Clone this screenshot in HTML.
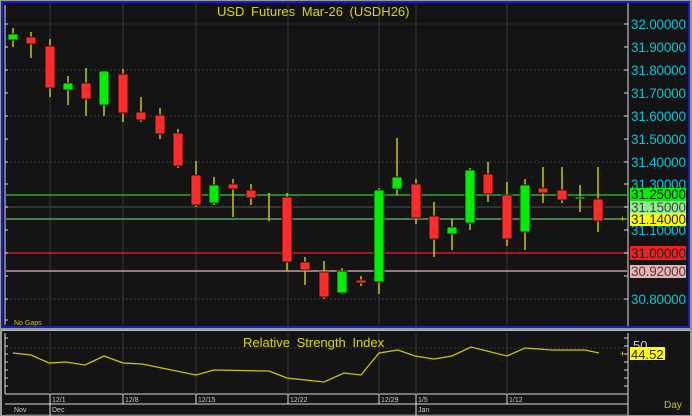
<!DOCTYPE html>
<html><head><meta charset="utf-8"><style>
html,body{margin:0;padding:0;background:#141414;width:692px;height:416px;overflow:hidden}
svg{display:block}
text{font-family:"Liberation Sans",sans-serif}
</style></head><body>
<svg width="692" height="416" viewBox="0 0 692 416" xmlns="http://www.w3.org/2000/svg">
<rect x="0" y="0" width="692" height="416" fill="#9a9a9a"/>
<rect x="1" y="1" width="689" height="327" fill="#1a1ad0"/>
<rect x="3" y="3" width="685" height="323" fill="#141414"/>
<g stroke="#2c2c2c" stroke-width="1.5">
<line x1="50" y1="3" x2="50" y2="326"/><line x1="123" y1="3" x2="123" y2="326"/>
<line x1="196" y1="3" x2="196" y2="326"/><line x1="288" y1="3" x2="288" y2="326"/>
<line x1="379" y1="3" x2="379" y2="326"/><line x1="416" y1="3" x2="416" y2="326"/>
<line x1="507" y1="3" x2="507" y2="326"/>
</g>
<g stroke="#3a3a3a" stroke-dasharray="2,2">
<line x1="6" y1="24" x2="627" y2="24"/><line x1="6" y1="70" x2="627" y2="70"/>
<line x1="6" y1="116" x2="627" y2="116"/><line x1="6" y1="162" x2="627" y2="162"/>
<line x1="6" y1="299" x2="627" y2="299"/>
</g>
<line x1="6" y1="207" x2="627" y2="207" stroke="#333" stroke-width="2"/>
<line x1="6" y1="195" x2="627" y2="195" stroke="#2fa82f" stroke-width="1.5"/>
<line x1="6" y1="219" x2="627" y2="219" stroke="#5fa05f" stroke-width="1.5"/>
<line x1="6" y1="253" x2="627" y2="253" stroke="#c81e1e" stroke-width="1.5"/>
<line x1="6" y1="271" x2="627" y2="271" stroke="#c89a9a" stroke-width="1.5"/>
<line x1="5" y1="5" x2="5" y2="325" stroke="#ddd"/>
<g stroke="#ddd">
<line x1="5" y1="24" x2="8" y2="24"/><line x1="5" y1="47" x2="8" y2="47"/><line x1="5" y1="70" x2="8" y2="70"/><line x1="5" y1="93" x2="8" y2="93"/><line x1="5" y1="116" x2="8" y2="116"/><line x1="5" y1="139" x2="8" y2="139"/><line x1="5" y1="162" x2="8" y2="162"/><line x1="5" y1="184" x2="8" y2="184"/><line x1="5" y1="207" x2="8" y2="207"/><line x1="5" y1="230" x2="8" y2="230"/><line x1="5" y1="253" x2="8" y2="253"/><line x1="5" y1="276" x2="8" y2="276"/><line x1="5" y1="299" x2="8" y2="299"/><line x1="5" y1="320" x2="8" y2="320"/>
</g>
<line x1="628" y1="3" x2="628" y2="326" stroke="#ddd"/>
<g stroke="#ddd">
<line x1="624" y1="24" x2="628" y2="24"/><line x1="624" y1="47" x2="628" y2="47"/><line x1="624" y1="70" x2="628" y2="70"/><line x1="624" y1="93" x2="628" y2="93"/><line x1="624" y1="116" x2="628" y2="116"/><line x1="624" y1="139" x2="628" y2="139"/><line x1="624" y1="162" x2="628" y2="162"/><line x1="624" y1="184" x2="628" y2="184"/><line x1="624" y1="207" x2="628" y2="207"/><line x1="624" y1="230" x2="628" y2="230"/><line x1="624" y1="253" x2="628" y2="253"/><line x1="624" y1="276" x2="628" y2="276"/><line x1="624" y1="299" x2="628" y2="299"/>
</g>
<g fill="#00c8d8" font-size="13.5">
<text x="631" y="29" textLength="55">32.00000</text><text x="631" y="52" textLength="55">31.90000</text><text x="631" y="75" textLength="55">31.80000</text><text x="631" y="98" textLength="55">31.70000</text><text x="631" y="121" textLength="55">31.60000</text><text x="631" y="144" textLength="55">31.50000</text><text x="631" y="167" textLength="55">31.40000</text><text x="631" y="189" textLength="55">31.30000</text><text x="631" y="235" textLength="55">31.10000</text><text x="631" y="304" textLength="55">30.80000</text>
</g>
<rect x="630" y="188" width="56" height="13" fill="#00ee00"/><text x="631" y="199" font-size="13.5" textLength="55" fill="#222">31.25000</text>
<rect x="630" y="201" width="56" height="12" fill="#90ee90"/><text x="631" y="212" font-size="13.5" textLength="55" fill="#444">31.15000</text>
<rect x="630" y="213" width="56" height="13" fill="#ffff00"/><text x="631" y="224" font-size="13.5" textLength="55" fill="#222">31.14000</text>
<rect x="630" y="246" width="56" height="14" fill="#ee2020"/><text x="631" y="258" font-size="13.5" textLength="55" fill="#222">31.00000</text>
<rect x="630" y="265" width="56" height="13" fill="#f0b0b0"/><text x="631" y="276" font-size="13.5" textLength="55" fill="#444">30.92000</text>
<text x="620" y="222" font-size="9" fill="#e0d000">+</text>
<text x="217" y="16" font-size="13" fill="#d8d800" word-spacing="3">USD Futures Mar-26 (USDH26)</text>
<text x="14" y="325" font-size="7" fill="#c8c800">No Gaps</text>
<g stroke="#c8c800" stroke-width="1.5">
<line x1="13" y1="28" x2="13" y2="47"/><line x1="31" y1="32" x2="31" y2="58"/><line x1="50" y1="39" x2="50" y2="97"/><line x1="68" y1="76" x2="68" y2="105"/><line x1="86" y1="68" x2="86" y2="116"/><line x1="104" y1="71" x2="104" y2="116"/><line x1="123" y1="69" x2="123" y2="122"/><line x1="141" y1="97" x2="141" y2="122"/><line x1="160" y1="108" x2="160" y2="139"/><line x1="178" y1="129" x2="178" y2="168"/><line x1="196" y1="161" x2="196" y2="207"/><line x1="214" y1="177" x2="214" y2="205"/><line x1="233" y1="179" x2="233" y2="217"/><line x1="251" y1="184" x2="251" y2="205"/><line x1="269" y1="193" x2="269" y2="221"/><line x1="287" y1="193" x2="287" y2="271"/><line x1="305" y1="257" x2="305" y2="285"/><line x1="324" y1="261" x2="324" y2="299"/><line x1="342" y1="268" x2="342" y2="294"/><line x1="361" y1="276" x2="361" y2="286"/><line x1="379" y1="188" x2="379" y2="294"/><line x1="397" y1="138" x2="397" y2="195"/><line x1="416" y1="179" x2="416" y2="224"/><line x1="434" y1="202" x2="434" y2="257"/><line x1="452" y1="219" x2="452" y2="250"/><line x1="470" y1="168" x2="470" y2="230"/><line x1="488" y1="162" x2="488" y2="202"/><line x1="507" y1="182" x2="507" y2="246"/><line x1="525" y1="179" x2="525" y2="250"/><line x1="543" y1="167" x2="543" y2="203"/><line x1="562" y1="167" x2="562" y2="203"/><line x1="580" y1="185" x2="580" y2="212"/><line x1="598" y1="167" x2="598" y2="232"/>
</g>
<g fill="#00ee00" stroke="#0a0a0a" stroke-width="0.8">
<rect x="8" y="34" width="10" height="6"/><rect x="63" y="83" width="10" height="7"/><rect x="99" y="71" width="10" height="34"/><rect x="209" y="185" width="10" height="18"/><rect x="337" y="271" width="10" height="22"/><rect x="374" y="190" width="10" height="92"/><rect x="392" y="177" width="10" height="12"/><rect x="447" y="227" width="10" height="7"/><rect x="465" y="170" width="10" height="53"/><rect x="520" y="185" width="10" height="47"/><rect x="575" y="197" width="10" height="2"/>
</g>
<g fill="#ff2a2a" stroke="#0a0a0a" stroke-width="0.8">
<rect x="26" y="37" width="10" height="7"/><rect x="45" y="46" width="10" height="42"/><rect x="81" y="83" width="10" height="16"/><rect x="118" y="74" width="10" height="39"/><rect x="136" y="112" width="10" height="8"/><rect x="155" y="115" width="10" height="19"/><rect x="173" y="133" width="10" height="33"/><rect x="191" y="175" width="10" height="30"/><rect x="228" y="184" width="10" height="5"/><rect x="246" y="190" width="10" height="8"/><rect x="282" y="197" width="10" height="65"/><rect x="300" y="262" width="10" height="8"/><rect x="319" y="272" width="10" height="25"/><rect x="356" y="280" width="10" height="3"/><rect x="411" y="184" width="10" height="34"/><rect x="429" y="216" width="10" height="23"/><rect x="483" y="174" width="10" height="20"/><rect x="502" y="195" width="10" height="44"/><rect x="538" y="188" width="10" height="5"/><rect x="557" y="190" width="10" height="10"/><rect x="593" y="199" width="10" height="22"/>
</g>
<rect x="2" y="330" width="688" height="85" fill="#141414"/>
<line x1="2" y1="330.5" x2="690" y2="330.5" stroke="#bbb"/>
<line x1="5" y1="333" x2="5" y2="394" stroke="#ddd"/>
<line x1="5" y1="394" x2="628" y2="394" stroke="#ddd"/>
<line x1="628" y1="333" x2="628" y2="416" stroke="#ddd"/>
<g stroke="#ddd"><line x1="5" y1="338" x2="8" y2="338"/><line x1="5" y1="346" x2="8" y2="346"/><line x1="5" y1="354" x2="8" y2="354"/><line x1="5" y1="362" x2="8" y2="362"/><line x1="5" y1="370" x2="8" y2="370"/><line x1="5" y1="378" x2="8" y2="378"/><line x1="5" y1="386" x2="8" y2="386"/><line x1="624" y1="338" x2="628" y2="338"/><line x1="624" y1="346" x2="628" y2="346"/><line x1="624" y1="354" x2="628" y2="354"/><line x1="624" y1="362" x2="628" y2="362"/><line x1="624" y1="370" x2="628" y2="370"/><line x1="624" y1="378" x2="628" y2="378"/><line x1="624" y1="386" x2="628" y2="386"/></g>
<g stroke="#2c2c2c" stroke-width="1.5"><line x1="50" y1="333" x2="50" y2="394"/><line x1="123" y1="333" x2="123" y2="394"/><line x1="196" y1="333" x2="196" y2="394"/><line x1="288" y1="333" x2="288" y2="394"/><line x1="379" y1="333" x2="379" y2="394"/><line x1="416" y1="333" x2="416" y2="394"/><line x1="507" y1="333" x2="507" y2="394"/></g>
<line x1="6" y1="348" x2="627" y2="348" stroke="#333" stroke-dasharray="2,2"/>
<polyline fill="none" stroke="#c8c800" stroke-width="1.3" points="13,353 31,355 49,363 66,362 85,365 104,356 123,363 142,364 196,375 214,370 269,371 287,378 324,382 344,373 361,375 379,353 398,350 415,356 434,359 452,356 471,347 507,356 525,348 552,350 585,350 599,353"/>
<text x="243" y="347" font-size="13" fill="#d8d800" word-spacing="3">Relative Strength Index</text>
<text x="633" y="350" font-size="13" fill="#ccc">50</text>
<rect x="630" y="347" width="35" height="13" fill="#ffff00"/>
<text x="631" y="359" font-size="13" fill="#222">44.52</text>
<text x="620" y="357" font-size="9" fill="#e0d000">+</text>
<line x1="5" y1="404" x2="628" y2="404" stroke="#ddd"/>
<line x1="5" y1="415" x2="628" y2="415" stroke="#777"/>
<g stroke="#ddd"><line x1="50" y1="394" x2="50" y2="416"/><line x1="123" y1="394" x2="123" y2="404"/><line x1="196" y1="394" x2="196" y2="404"/><line x1="288" y1="394" x2="288" y2="404"/><line x1="379" y1="394" x2="379" y2="404"/><line x1="416" y1="394" x2="416" y2="416"/><line x1="507" y1="394" x2="507" y2="404"/></g>
<g font-size="7" fill="#ccc">
<text x="52" y="402">12/1</text><text x="125" y="402">12/8</text><text x="198" y="402">12/15</text><text x="290" y="402">12/22</text><text x="381" y="402">12/29</text><text x="418" y="402">1/5</text><text x="509" y="402">1/12</text>
<text x="14" y="412">Nov</text><text x="52" y="412">Dec</text><text x="418" y="412">Jan</text>
</g>
<text x="664" y="408" font-size="10" fill="#c8c800">Day</text>
</svg>
</body></html>
